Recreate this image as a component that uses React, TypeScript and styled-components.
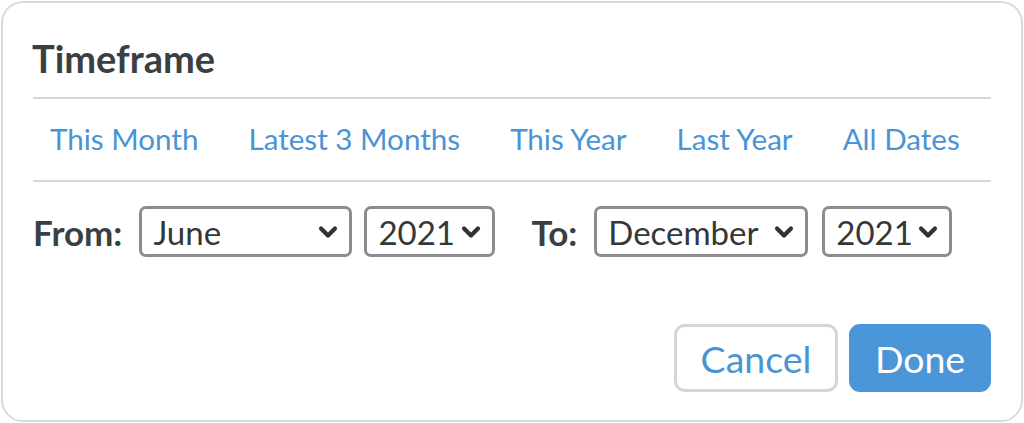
import React from "react";
import styled, { createGlobalStyle } from "styled-components";

const Global = createGlobalStyle`
  html, body { margin: 0; padding: 0; background: #ffffff; }
  body { padding: 1px; font-family: Lato, "Open Sans", sans-serif; }
  * { box-sizing: border-box; }
`;

const Card = styled.div`
  width: 1022px;
  height: 421px;
  border: 2px solid #d9dadc;
  border-radius: 22px;
  background: #fff;
  padding: 33px 30px 28px 30px;
  display: flex;
  flex-direction: column;
`;

const Title = styled.h1`
  margin: 0;
  font-size: 38px;
  line-height: 45px;
  font-weight: 700;
  color: #3a3f42;
  padding-bottom: 16px;
  border-bottom: 2px solid #d6d7d9;
  text-indent: -1px;
`;

const Presets = styled.div`
  display: flex;
  gap: 50px;
  padding: 22px 17px 23px;
  border-bottom: 2px solid #d6d7d9;
`;

const PresetLink = styled.a`
  font-size: 29.6px;
  line-height: 36px;
  color: #4a94d6;
  text-decoration: none;
  cursor: pointer;
`;

const RangeRow = styled.div`
  display: flex;
  align-items: center;
  padding-top: 24px;
`;

const Group = styled.div<{ $gap?: number }>`
  display: flex;
  align-items: center;
  margin-right: ${(p) => p.$gap ?? 0}px;
`;

const Label = styled.span`
  font-size: 35px;
  font-weight: 700;
  color: #3a3f42;
  margin-right: 17px;
`;

const SelectBox = styled.div<{ $w: number; $mr?: number }>`
  width: ${(p) => p.$w}px;
  height: 51px;
  border: 3px solid #8c8c90;
  border-radius: 7px;
  display: flex;
  align-items: center;
  justify-content: space-between;
  padding: 0 11px 0 11px;
  margin-right: ${(p) => p.$mr ?? 0}px;
  font-size: 33px;
  color: #33373a;
`;

const Chevron = () => (
  <svg width="20" height="14" viewBox="0 0 20 14" fill="none">
    <path d="M3 3.5 L10 10.5 L17 3.5" stroke="#2f3336" strokeWidth="4.2" strokeLinecap="round" strokeLinejoin="round" />
  </svg>
);

const Footer = styled.div`
  margin-top: auto;
  display: flex;
  justify-content: flex-end;
  gap: 11px;
`;

const Button = styled.button<{ $primary?: boolean }>`
  height: 68px;
  width: ${(p) => (p.$primary ? 142 : 164)}px;
  padding: 0;
  font-family: Lato, sans-serif;
  font-size: 37.5px;
  border-radius: 11px;
  border: 3px solid ${(p) => (p.$primary ? "#4a96d9" : "#d4d5d8")};
  background: ${(p) => (p.$primary ? "#4a96d9" : "#fff")};
  color: ${(p) => (p.$primary ? "#fff" : "#4a94d6")};
  cursor: pointer;
`;

export default function App() {
  return (
    <>
      <Global />
      <Card>
        <Title>Timeframe</Title>
        <Presets>
          {["This Month", "Latest 3 Months", "This Year", "Last Year", "All Dates"].map((t) => (
            <PresetLink key={t}>{t}</PresetLink>
          ))}
        </Presets>
        <RangeRow>
          <Group $gap={36}>
            <Label>From:</Label>
            <SelectBox $w={213} $mr={12}>
              <span>June</span>
              <Chevron />
            </SelectBox>
            <SelectBox $w={131}>
              <span>2021</span>
              <Chevron />
            </SelectBox>
          </Group>
          <Group>
            <Label>To:</Label>
            <SelectBox $w={214} $mr={14}>
              <span>December</span>
              <Chevron />
            </SelectBox>
            <SelectBox $w={130}>
              <span>2021</span>
              <Chevron />
            </SelectBox>
          </Group>
        </RangeRow>
        <Footer>
          <Button>Cancel</Button>
          <Button $primary>Done</Button>
        </Footer>
      </Card>
    </>
  );
}
